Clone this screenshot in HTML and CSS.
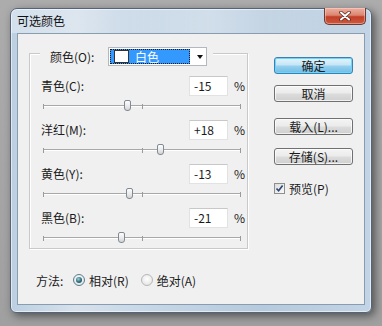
FILE: index.html
```html
<!DOCTYPE html>
<html lang="zh">
<head>
<meta charset="utf-8">
<link rel="stylesheet" href="styles.css">
</head>
<body>
<div class="desk">
  <div class="window">
    <div class="titlebar">
      <span class="title">可选颜色</span>
      <div class="close">
        <svg width="14" height="10" viewBox="0 0 14 10">
          <path d="M3 1.5 L11 8.5 M11 1.5 L3 8.5" stroke="#5a2a22" stroke-width="3.6" stroke-linecap="round"/>
          <path d="M3 1.5 L11 8.5 M11 1.5 L3 8.5" stroke="#ffffff" stroke-width="2" stroke-linecap="round"/>
        </svg>
      </div>
    </div>
    <div class="client">
      <div class="top">
        <div class="group">
          <div class="legend">
            <span class="lbl">颜色(O):</span>
            <div class="combo">
              <div class="sel"><span class="swatch"></span><span class="seltext">白色</span></div>
              <span class="arrow"></span>
            </div>
          </div>
          <div class="rows">
            <div class="row">
              <div class="row-top"><span class="name">青色(C):</span><span class="field">-15</span><span class="pct">%</span></div>
              <div class="slider"><span class="track"></span><span class="tick t0"></span><span class="tick t1"></span><span class="tick t2"></span><span class="thumb" style="left:42.5%"></span></div>
            </div>
            <div class="row">
              <div class="row-top"><span class="name">洋红(M):</span><span class="field">+18</span><span class="pct">%</span></div>
              <div class="slider"><span class="track"></span><span class="tick t0"></span><span class="tick t1"></span><span class="tick t2"></span><span class="thumb" style="left:59%"></span></div>
            </div>
            <div class="row">
              <div class="row-top"><span class="name">黄色(Y):</span><span class="field">-13</span><span class="pct">%</span></div>
              <div class="slider"><span class="track"></span><span class="tick t0"></span><span class="tick t1"></span><span class="tick t2"></span><span class="thumb" style="left:43.5%"></span></div>
            </div>
            <div class="row">
              <div class="row-top"><span class="name">黑色(B):</span><span class="field">-21</span><span class="pct">%</span></div>
              <div class="slider"><span class="track"></span><span class="tick t0"></span><span class="tick t1"></span><span class="tick t2"></span><span class="thumb" style="left:39.5%"></span></div>
            </div>
          </div>
        </div>
        <div class="side">
          <div class="btn default">确定</div>
          <div class="btn b-cancel">取消</div>
          <div class="btn b-load">载入(L)...</div>
          <div class="btn b-save">存储(S)...</div>
          <div class="check-row">
            <span class="checkbox">
              <svg width="9" height="9" viewBox="0 0 9 9"><path d="M1.5 4.5 L3.6 6.8 L7.6 1.6" fill="none" stroke="#2d4a73" stroke-width="1.7"/></svg>
            </span>
            <span>预览(P)</span>
          </div>
        </div>
      </div>
      <div class="method">
        <span class="mlabel">方法:</span>
        <span class="radio on"><span class="dot"></span></span>
        <span class="rtext">相对(R)</span>
        <span class="radio off"></span>
        <span class="rtext">绝对(A)</span>
      </div>
    </div>
  </div>
</div>
</body>
</html>
```

FILE: styles.css
```css
* { box-sizing: border-box; }
html, body { margin: 0; padding: 0; }
body {
  width: 382px;
  height: 326px;
  overflow: hidden;
  background: linear-gradient(180deg, #acacac 0%, #a0a0a0 100%);
  font-family: "Noto Sans CJK SC", "Noto Sans", sans-serif;
  font-size: 12px;
  color: #1b1b1b;
}
.desk { padding: 8px 10px 0 10px; }
.window {
  width: 362px;
  height: 305px;
  border: 1px solid #54657a;
  border-radius: 7px 7px 6px 6px;
  background: linear-gradient(90deg, #bccfe1 0%, #d6e1ec 18%, #c5d6e6 40%, #b6cadd 70%, #c2d4e5 100%);
  box-shadow: 3px 3px 9px rgba(30, 30, 30, 0.6), inset 0 0 0 1px rgba(255,255,255,0.55);
  display: flex;
  flex-direction: column;
}
.titlebar {
  height: 24px;
  display: flex;
  justify-content: space-between;
  align-items: flex-start;
  padding-left: 6px;
  padding-right: 5px;
  background: linear-gradient(90deg, rgba(255,255,255,0.35) 0%, rgba(255,255,255,0.05) 30%, rgba(255,255,255,0.3) 55%, rgba(255,255,255,0) 100%);
  border-radius: 6px 6px 0 0;
}
.title {
  font-size: 12px;
  line-height: 16px;
  margin-top: 4px;
  color: #111;
}
.close {
  width: 42px;
  height: 17px;
  margin-top: -1px;
  border: 1px solid #6b3a34;
  border-top: none;
  border-radius: 0 0 5px 5px;
  background: linear-gradient(180deg, #eeb0a2 0%, #dc8671 45%, #c23e27 55%, #cc5a40 100%);
  display: flex;
  align-items: center;
  justify-content: center;
  box-shadow: inset 0 0 0 1px rgba(255,220,210,0.45);
}
.client {
  margin: 0 6px 7px 6px;
  height: 272px;
  background: #f0f0f0;
  border: 1px solid #8a9db0;
  display: flex;
  flex-direction: column;
}
.top {
  display: flex;
  padding: 19px 0 0 11px;
}
.group {
  width: 219px;
  height: 196px;
  border: 1px solid #c9c9c9;
  box-shadow: inset 1px 1px 0 #ffffff, 1px 1px 0 #ffffff;
  display: flex;
  flex-direction: column;
}
.legend {
  align-self: flex-start;
  display: flex;
  align-items: center;
  height: 19px;
  margin: -7px 0 0 10px;
  padding: 0 6px 0 10px;
  background: #f0f0f0;
}
.lbl { width: 48px; line-height: 14px; }
.combo {
  margin-left: 10px;
  width: 99px;
  height: 19px;
  border: 1px solid #b3b8bf;
  background: #ffffff;
  display: flex;
  align-items: center;
  padding: 1px;
}
.sel {
  width: 80px;
  height: 15px;
  background: #3399ff;
  outline: 1px dotted #1a1a1a;
  outline-offset: -1px;
  display: flex;
  align-items: center;
  padding-left: 4px;
}
.swatch {
  width: 15px;
  height: 13px;
  background: #ffffff;
  border: 1px solid #333;
}
.seltext { color: #ffffff; margin-left: 6px; line-height: 14px; }
.arrow {
  margin-left: 7px;
  width: 0;
  height: 0;
  border-left: 3.5px solid transparent;
  border-right: 3.5px solid transparent;
  border-top: 4px solid #111;
}
.rows {
  margin-top: 10px;
  display: flex;
  flex-direction: column;
  gap: 4px;
}
.row { display: flex; flex-direction: column; }
.row-top {
  height: 20px;
  display: flex;
  align-items: center;
  padding-left: 11px;
}
.name { width: 148px; line-height: 14px; }
.field {
  width: 39px;
  height: 20px;
  background: #ffffff;
  border: 1px solid #e2e2e2;
  border-top-color: #c8c8c8;
  padding-left: 4px;
  line-height: 18px;
}
.pct { margin-left: 6px; line-height: 14px; }
.slider {
  position: relative;
  height: 20px;
  width: 198px;
  margin-left: 13px;
}
.track {
  position: absolute;
  left: 0;
  right: 0;
  top: 9px;
  height: 2px;
  border-top: 1px solid #a8a8a8;
  border-bottom: 1px solid #ffffff;
}
.tick {
  position: absolute;
  top: 8px;
  width: 1px;
  height: 5px;
  background: #9a9a9a;
}
.t0 { left: 0; }
.t1 { left: 99px; }
.t2 { right: 0; }
.thumb {
  position: absolute;
  top: 4px;
  width: 7px;
  height: 11px;
  margin-left: -3px;
  border: 1px solid #7f8a94;
  border-radius: 2px 2px 3px 3px;
  background: linear-gradient(180deg, #fdfdfd 0%, #e8e8e8 60%, #d2d2d2 100%);
}
.side {
  margin-left: 26px;
  margin-top: 4px;
  width: 79px;
  display: flex;
  flex-direction: column;
}
.btn {
  height: 17px;
  border: 1px solid #707070;
  border-radius: 3px;
  background: linear-gradient(180deg, #f4f4f4 0%, #ebebeb 48%, #dcdcdc 52%, #cfcfcf 100%);
  box-shadow: inset 0 0 0 1px rgba(255,255,255,0.7);
  display: flex;
  align-items: center;
  justify-content: center;
  line-height: 14px;
}
.default {
  border-color: #3c7fb1;
  background: linear-gradient(180deg, #e5f4fc 0%, #c4e5f6 48%, #98d1ef 52%, #6dbde6 100%);
  box-shadow: inset 0 0 0 1px #6ad6fb;
}
.b-cancel { margin-top: 11px; }
.b-load { margin-top: 16px; }
.b-save { margin-top: 13px; }
.check-row {
  margin-top: 16px;
  display: flex;
  align-items: center;
  height: 14px;
}
.checkbox {
  width: 11px;
  height: 11px;
  border: 1px solid #8f8f8f;
  background: linear-gradient(135deg, #dcdcdc, #fafafa);
  display: flex;
  align-items: center;
  justify-content: center;
  margin-right: 4px;
}
.method {
  display: flex;
  align-items: center;
  height: 20px;
  margin-top: 21px;
  padding-left: 18px;
}
.mlabel { width: 37px; }
.radio {
  width: 12px;
  height: 12px;
  border-radius: 50%;
  display: flex;
  align-items: center;
  justify-content: center;
}
.radio.on {
  border: 1px solid #5f7c8c;
  background: radial-gradient(circle at 50% 40%, #ffffff, #d3dde2);
}
.dot {
  width: 6px;
  height: 6px;
  border-radius: 50%;
  background: radial-gradient(circle at 40% 35%, #9fd2d9 0%, #2d6b78 55%, #1c4650 100%);
}
.radio.off {
  border: 1px solid #b7b7b7;
  background: radial-gradient(circle at 50% 40%, #ffffff, #dedede);
  margin-left: 12px;
}
.rtext { margin-left: 4px; }
```
